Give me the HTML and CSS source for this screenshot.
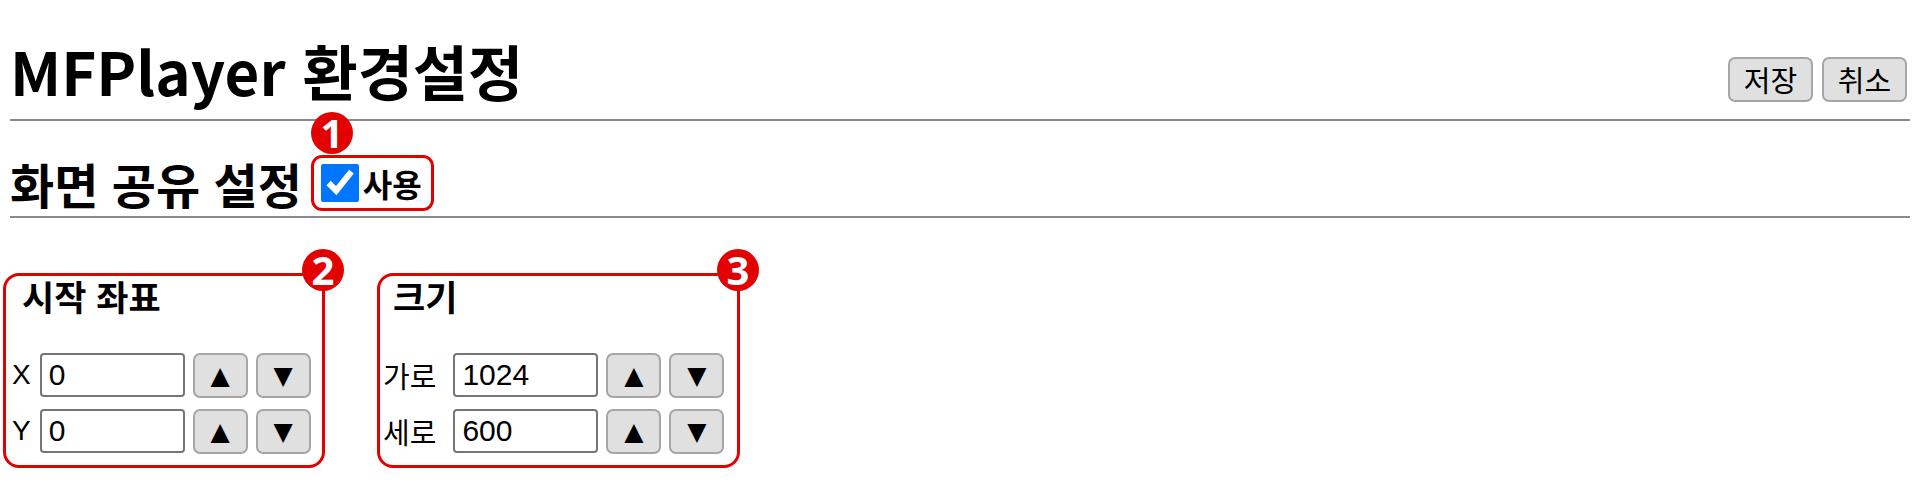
FILE: index.html
```html
<!DOCTYPE html>
<html lang="ko">
<head>
<meta charset="utf-8">
<title>MFPlayer 환경설정</title>
<link rel="stylesheet" href="styles.css">
</head>
<body>
<div class="page">
  <header class="topbar">
    <h1 class="title">MFPlayer 환경설정</h1>
    <div class="actions">
      <button class="btn">저장</button>
      <button class="btn">취소</button>
    </div>
  </header>
  <hr class="rule">
  <div class="section-head">
    <h2 class="section-title">화면 공유 설정</h2>
    <label class="toggle">
      <span class="badge badge-left">1</span>
      <input class="check" type="checkbox" checked>
      <span class="toggle-text">사용</span>
    </label>
  </div>
  <hr class="rule">
  <div class="groups">
    <section class="group group-pos">
      <span class="badge badge-right">2</span>
      <h3 class="group-title">시작 좌표</h3>
      <div class="rows">
        <div class="row"><span class="lbl">X</span><input class="num" value="0"><button class="step">▲</button><button class="step">▼</button></div>
        <div class="row"><span class="lbl">Y</span><input class="num" value="0"><button class="step">▲</button><button class="step">▼</button></div>
      </div>
    </section>
    <section class="group group-size">
      <span class="badge badge-right">3</span>
      <h3 class="group-title">크기</h3>
      <div class="rows">
        <div class="row"><span class="lbl lbl-ko">가로</span><input class="num" value="1024"><button class="step">▲</button><button class="step">▼</button></div>
        <div class="row"><span class="lbl lbl-ko">세로</span><input class="num" value="600"><button class="step">▲</button><button class="step">▼</button></div>
      </div>
    </section>
  </div>
</div>
</body>
</html>
```

FILE: styles.css
```css
html, body {
  margin: 0;
  background: #ffffff;
  color: #000000;
  font-family: "Noto Sans CJK KR", "Noto Sans", sans-serif;
}

.page {
  padding: 0 10px;
}

.topbar {
  display: flex;
  justify-content: space-between;
  align-items: flex-end;
  height: 119px;
}

.title {
  margin: 0 0 19px;
  font-family: "Noto Sans CJK KR", sans-serif;
  font-weight: 700;
  font-size: 60px;
  line-height: 1;
  white-space: nowrap;
}

.actions {
  display: flex;
  gap: 9px;
  margin: 0 3px 17px 0;
}

.btn {
  box-sizing: border-box;
  width: 85px;
  height: 45px;
  padding: 0;
  background: #e0e0e0;
  border: 2px solid #a6a6a6;
  border-radius: 7px;
  font-family: "Noto Sans CJK KR", sans-serif;
  font-size: 29px;
  line-height: 1;
  color: #000;
}

.rule {
  margin: 0;
  border: 0;
  height: 2px;
  background: #8a8a8a;
}

.section-head {
  display: flex;
  align-items: center;
  gap: 9px;
  padding: 34px 0 5px;
}

.section-title {
  margin: 0;
  font-weight: 700;
  font-size: 48px;
  line-height: 1.1;
  white-space: nowrap;
}

.toggle {
  position: relative;
  box-sizing: border-box;
  height: 56px;
  display: flex;
  align-items: center;
  gap: 4px;
  padding: 0 9px 0 7px;
  border: 3px solid #e30000;
  border-radius: 11px;
}

.check {
  width: 38px;
  height: 38px;
  margin: 0;
  accent-color: #0075ff;
}

.toggle-text {
  font-weight: 700;
  font-size: 32px;
  line-height: 1;
  white-space: nowrap;
}

.badge {
  position: absolute;
  width: 42px;
  height: 42px;
  border-radius: 50%;
  background: #e30000;
  color: #ffffff;
  font-family: "Noto Sans", sans-serif;
  font-weight: 700;
  font-size: 40px;
  line-height: 42px;
  text-align: center;
}

.badge-left {
  left: -3px;
  top: -46px;
}

.badge-right {
  top: -27px;
  right: -22px;
}

.groups {
  display: flex;
  gap: 52px;
  margin: 55px 0 0 -7px;
}

.group {
  position: relative;
  box-sizing: border-box;
  height: 195px;
  padding: 0 12px 11px 6px;
  border: 3px solid #e30000;
  border-radius: 16px;
}

.group-pos {
  width: 322px;
}

.group-size {
  width: 363px;
  padding-left: 3px;
}

.group-title {
  margin: 0 0 36px;
  padding-left: 10px;
  font-weight: 700;
  font-size: 35px;
  line-height: 1.15;
  white-space: nowrap;
}

.rows {
  display: flex;
  flex-direction: column;
  gap: 10px;
}

.row {
  display: flex;
  align-items: center;
  gap: 8px;
  height: 46px;
}

.lbl {
  flex-shrink: 0;
  white-space: nowrap;
  font-family: "Liberation Sans", "Noto Sans CJK KR", sans-serif;
  font-size: 28px;
  line-height: 1;
  margin-right: 1px;
}

.lbl-ko {
  font-family: "Noto Sans CJK KR", sans-serif;
  font-size: 29px;
  margin-right: 9px;
}

.num {
  flex-shrink: 0;
  box-sizing: border-box;
  width: 145px;
  height: 44px;
  margin: 0;
  padding: 0 7px;
  border: 2px solid #767676;
  border-radius: 4px;
  font-family: "Liberation Sans", sans-serif;
  font-size: 30px;
  color: #000;
  background: #fff;
}

.step {
  flex-shrink: 0;
  box-sizing: border-box;
  width: 55px;
  height: 45px;
  margin: 0;
  padding: 0;
  background: #e0e0e0;
  border: 2px solid #a6a6a6;
  border-radius: 7px;
  font-family: "DejaVu Sans", sans-serif;
  font-size: 25px;
  line-height: 1;
  color: #000;
}
```
